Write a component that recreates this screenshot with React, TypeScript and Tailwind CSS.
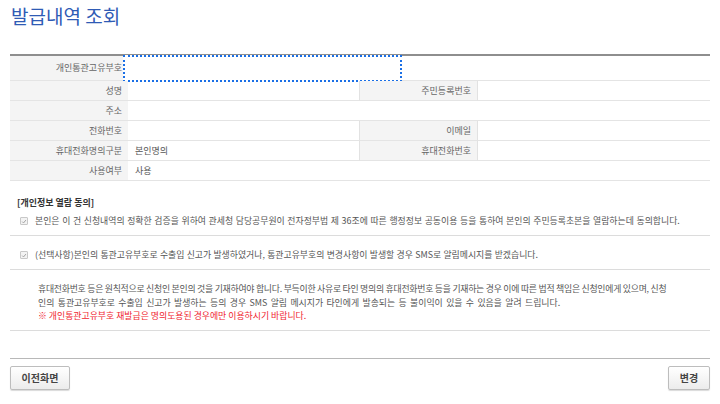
import React from "react";

const font = { fontFamily: '"Noto Sans CJK KR", "Noto Sans", sans-serif' };

function Check() {
  return (
    <span className="mr-[7px] mb-[2px] inline-flex h-[8px] w-[8px] shrink-0 items-center justify-center rounded-[1px] border border-[#c8c8c8] bg-[#f3f3f3]">
      <svg viewBox="0 0 10 10" className="h-[7px] w-[7px]">
        <path d="M2 5.2 L4.2 7.4 L8.2 2.6" fill="none" stroke="#a0a0a0" strokeWidth="1.6" />
      </svg>
    </span>
  );
}

function Label({ children, border = false }: { children?: React.ReactNode; border?: boolean }) {
  return (
    <div className={`flex items-center justify-end bg-[#f4f4f4] pr-[6px] text-[9px] text-[#666] ${border ? "border-x border-[#e2e2e2]" : ""}`}>
      {children}
    </div>
  );
}

function Value({ children, span = false }: { children?: React.ReactNode; span?: boolean }) {
  return <div className={`flex items-center pl-[7px] text-[9px] text-[#555] ${span ? "col-span-3" : ""}`}>{children}</div>;
}

export default function App() {
  return (
    <div className="min-h-[404px] w-[720px] bg-white px-[10px]" style={font}>
      <div className="h-[54px] pt-[2px] pl-[1px] text-[19px] leading-[28px] text-[#2f5bb5]">발급내역 조회</div>

      <div className="grid grid-cols-[118px_231px_119px_1fr] border-t-2 border-[#8e8e8e] [&>div]:border-b [&>div]:border-b-[#e4e4e4]">
        <Label>개인통관고유부호</Label>
        <div className="col-span-3 flex h-[25px] items-center">
          <div className="ml-[-5px] h-[27px] w-[279px] border-2 border-dotted border-[#1a6fe6] bg-white" />
        </div>

        <div className="contents [&>div]:h-[20px] [&>div]:border-b [&>div]:border-b-[#e4e4e4]">
          <Label>성명</Label>
          <Value />
          <Label border>주민등록번호</Label>
          <Value />

          <Label>주소</Label>
          <Value span />

          <Label>전화번호</Label>
          <Value />
          <Label border>이메일</Label>
          <Value />

          <Label>휴대전화명의구분</Label>
          <Value>본인명의</Value>
          <Label border>휴대전화번호</Label>
          <Value />

          <Label>사용여부</Label>
          <Value span>사용</Value>
        </div>
      </div>

      <div className="mt-[16px] pl-[7px] text-[9px] font-bold leading-[12px] text-[#333]">[개인정보 열람 동의]</div>

      <div className="flex h-[27px] items-end border-b border-[#dcdcdc] pb-[8px] pl-[10px] text-[8.9px] leading-[12px] text-[#555]">
        <Check />
        <span className="whitespace-nowrap [word-spacing:0.65px]">
          본인은 이 건 신청내역의 정확한 검증을 위하여 관세청 담당공무원이 전자정부법 제 36조에 따른 행정정보 공동이용 등을 통하여 본인의 주민등록초본을 열람하는데 동의합니다.
        </span>
      </div>

      <div className="flex h-[34px] items-end border-b border-[#dcdcdc] pb-[8px] pl-[10px] text-[8.9px] leading-[12px] text-[#555]">
        <Check />
        <span className="whitespace-nowrap [word-spacing:0.3px]">
          (선택사항)본인의 통관고유부호로 수출입 신고가 발생하였거나, 통관고유부호의 변경사항이 발생할 경우 SMS로 알림메시지를 받겠습니다.
        </span>
      </div>

      <div className="border-b border-[#dcdcdc] pt-[12px] pb-[7px] pl-[28px] text-[8.9px] leading-[13.5px] text-[#555] [&>p]:whitespace-nowrap">
        <p className="tracking-[-0.25px]">
          휴대전화번호 등은 원칙적으로 신청인 본인의 것을 기재하여야 합니다. 부득이한 사유로 타인 명의의 휴대전화번호 등을 기재하는 경우 이에 따른 법적 책임은 신청인에게 있으며, 신청
        </p>
        <p className="[word-spacing:1.4px]">
          인의 통관고유부호로 수출입 신고가 발생하는 등의 경우 SMS 알림 메시지가 타인에게 발송되는 등 불이익이 있을 수 있음을 알려 드립니다.
        </p>
        <p className="text-[#f0252f]">※ 개인통관고유부호 재발급은 명의도용된 경우에만 이용하시기 바랍니다.</p>
      </div>

      <div className="mt-[27px] flex justify-between border-t border-[#b8b8b8] pt-[7px]">
        <button className="h-[24px] w-[60px] rounded-[2px] border border-[#bdbdbd] bg-gradient-to-b from-white to-[#ececec] text-[10px] font-bold text-[#444] shadow-[0_1px_1px_rgba(0,0,0,0.15)]">
          이전화면
        </button>
        <button className="h-[24px] w-[42px] rounded-[2px] border border-[#bdbdbd] bg-gradient-to-b from-white to-[#ececec] text-[10px] font-bold text-[#444] shadow-[0_1px_1px_rgba(0,0,0,0.15)]">
          변경
        </button>
      </div>
    </div>
  );
}
